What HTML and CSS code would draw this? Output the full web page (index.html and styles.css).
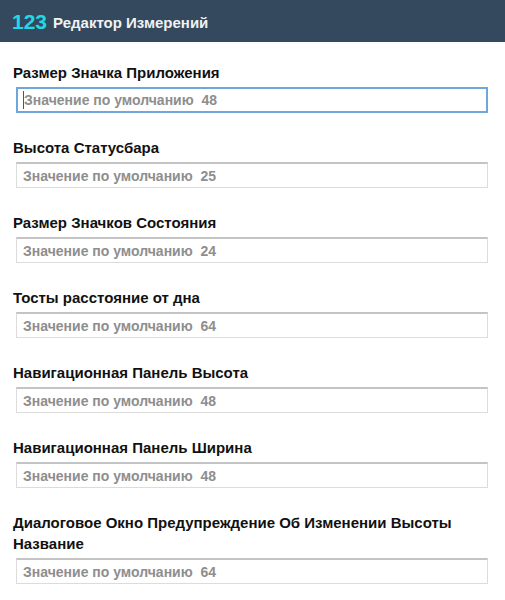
FILE: index.html
```html
<!DOCTYPE html>
<html lang="ru">
<head>
<meta charset="utf-8">
<title>Редактор Измерений</title>
<link rel="stylesheet" href="styles.css">
</head>
<body>
<header class="topbar">
  <span class="logo">123</span>
  <span class="title">Редактор Измерений</span>
</header>
<main class="form">
  <div class="field">
    <label class="label">Размер Значка Приложения</label>
    <div class="input-wrap caret">
      <input class="input active" type="text" placeholder="Значение по умолчанию  48">
    </div>
  </div>
  <div class="field">
    <label class="label">Высота Статусбара</label>
    <div class="input-wrap">
      <input class="input" type="text" placeholder="Значение по умолчанию  25">
    </div>
  </div>
  <div class="field">
    <label class="label">Размер Значков Состояния</label>
    <div class="input-wrap">
      <input class="input" type="text" placeholder="Значение по умолчанию  24">
    </div>
  </div>
  <div class="field">
    <label class="label">Тосты расстояние от дна</label>
    <div class="input-wrap">
      <input class="input" type="text" placeholder="Значение по умолчанию  64">
    </div>
  </div>
  <div class="field">
    <label class="label">Навигационная Панель Высота</label>
    <div class="input-wrap">
      <input class="input" type="text" placeholder="Значение по умолчанию  48">
    </div>
  </div>
  <div class="field">
    <label class="label">Навигационная Панель Ширина</label>
    <div class="input-wrap">
      <input class="input" type="text" placeholder="Значение по умолчанию  48">
    </div>
  </div>
  <div class="field">
    <label class="label">Диалоговое Окно Предупреждение Об Изменении Высоты Название</label>
    <div class="input-wrap">
      <input class="input" type="text" placeholder="Значение по умолчанию  64">
    </div>
  </div>
</main>
</body>
</html>
```
FILE: styles.css
```css
html, body {
  margin: 0;
  padding: 0;
  background: #ffffff;
}
body {
  font-family: "Liberation Sans", Arial, sans-serif;
  width: 505px;
}
.topbar {
  height: 42px;
  background: #34495e;
  display: flex;
  align-items: center;
  padding: 0 12px;
  box-sizing: border-box;
  gap: 6px;
}
.logo {
  color: #22d8e6;
  font-size: 21px;
  font-weight: bold;
  line-height: 1;
}
.title {
  color: #f0f2f4;
  font-size: 15px;
  font-weight: bold;
  line-height: 1;
  padding-top: 2px;
}
.form {
  padding: 20px 13px 0 13px;
  display: flex;
  flex-direction: column;
  gap: 24px;
}
.field {
  display: flex;
  flex-direction: column;
  gap: 4px;
}
.label {
  font-size: 15px;
  font-weight: bold;
  color: #111111;
  line-height: 21px;
}
.input-wrap {
  position: relative;
  display: flex;
  margin: 0 4px 0 3px;
}
.caret::after {
  content: "";
  position: absolute;
  left: 7px;
  top: 4px;
  width: 1px;
  height: 18px;
  background: #555;
}
.input {
  flex: 1;
  box-sizing: border-box;
  height: 26px;
  margin: 0;
  padding: 0 6px;
  border: 1px solid #dcdcdc;
  border-top: 2px solid #c4c4c4;
  font-family: "Liberation Sans", Arial, sans-serif;
  font-size: 14px;
  font-weight: bold;
  color: #333;
  background: #fff;
  outline: none;
}
.input::placeholder {
  color: #8e8e8e;
  opacity: 1;
}
.input.active {
  border: 2px solid #6fa6dc;
}
```
